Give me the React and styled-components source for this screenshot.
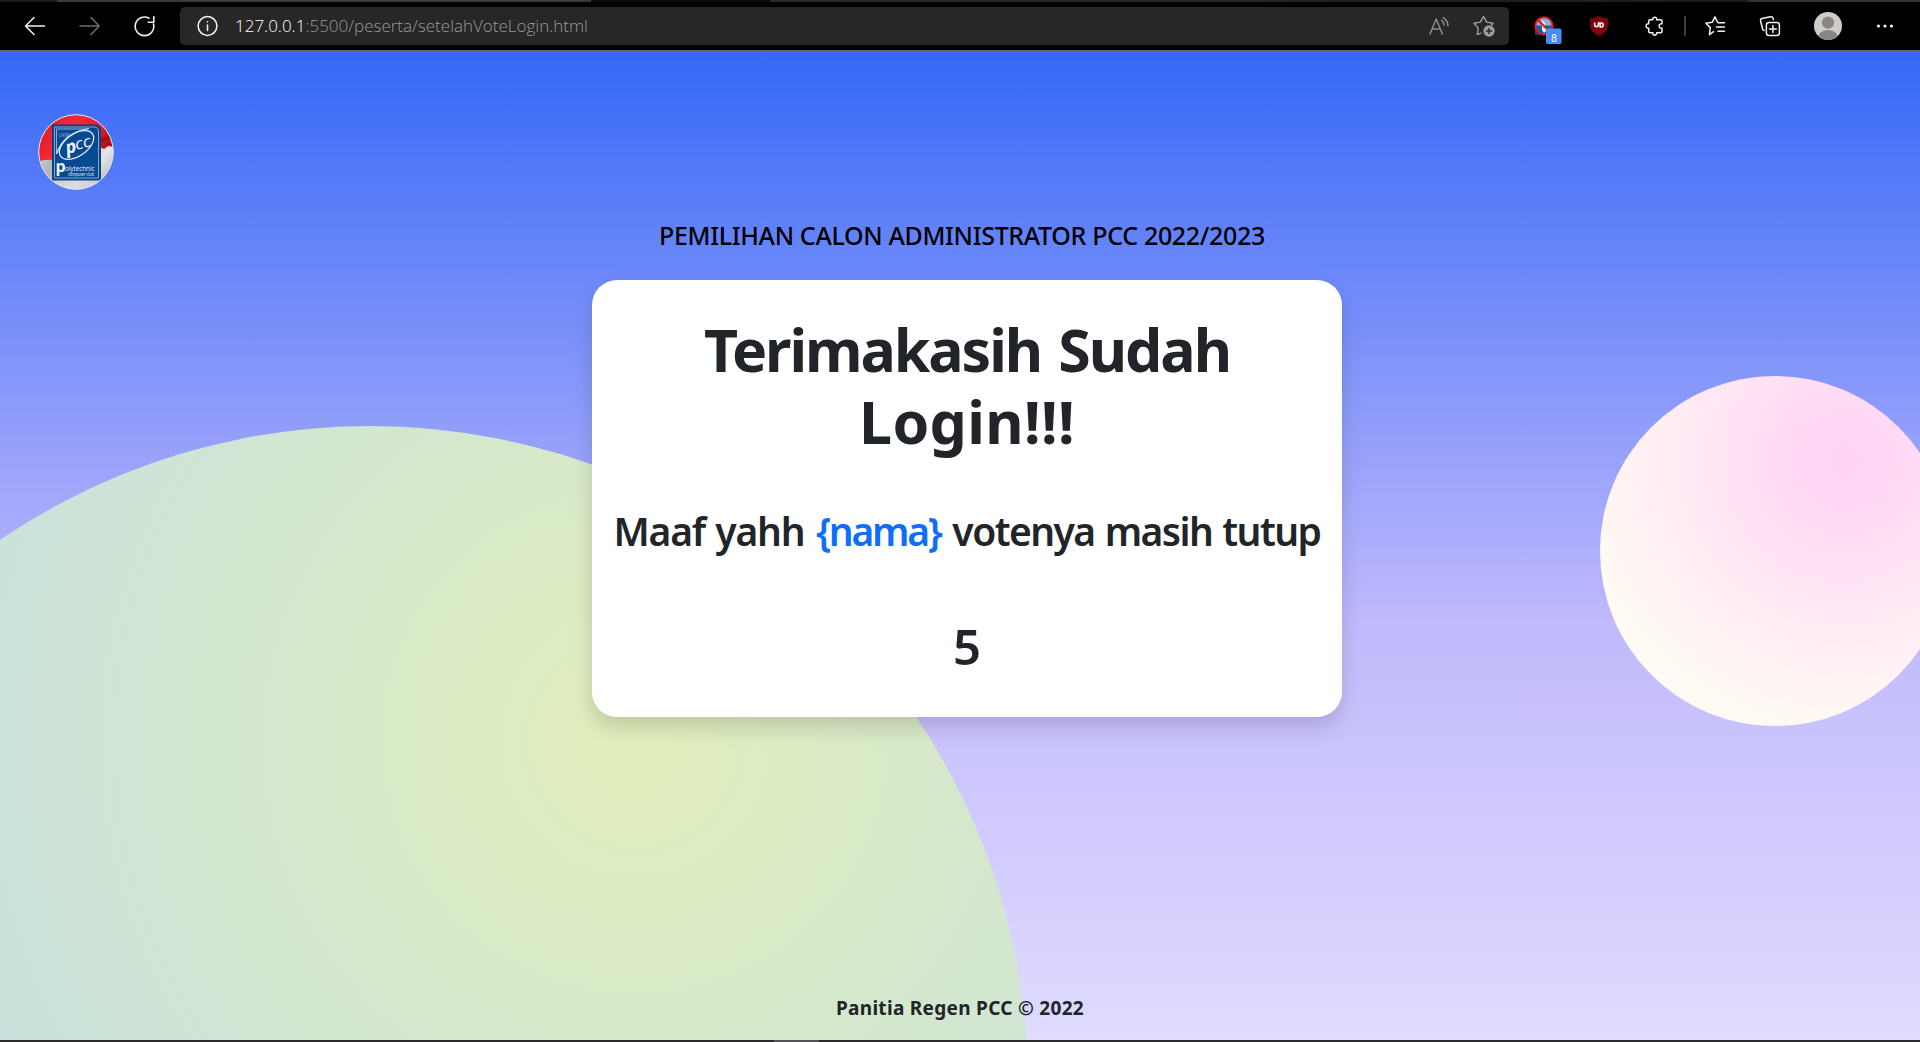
import React from "react";
import styled, { createGlobalStyle } from "styled-components";

const Global = createGlobalStyle`
  *, *::before, *::after { box-sizing: border-box; }
  body {
    margin: 0;
    overflow: hidden;
    background: #000;
    font-family: "Noto Sans", "Open Sans", sans-serif;
    color: #212529;
  }
  h1, h2, h3, p { margin: 0; }
`;

const Window = styled.div`
  display: flex;
  flex-direction: column;
  width: 1920px;
  height: 1042px;
  overflow: hidden;
`;

const TabEdge = styled.div`
  height: 2px;
  width: 100%;
  background: linear-gradient(90deg, #1c1c1c 57px, #3a3a3a 57px, #3a3a3a 591px, #0c0c0c 591px, #0c0c0c 770px, #2a2a2a 770px, #1c1c1c 1748px, #303030 1748px);
`;

const Toolbar = styled.header`
  display: flex;
  align-items: center;
  height: 49px;
  padding: 0 26px 1px 24px;
  border-bottom: 1px solid #6b6b66;
  background: #000;
  flex: none;
`;

const Slot = styled.span`
  display: flex;
  flex: none;
  align-items: center;
  justify-content: center;
  width: ${(p) => p.$w}px;
  margin-left: ${(p) => p.$gap || 0}px;
  color: ${(p) => p.$color || "#f2f2f2"};
  svg { display: block; overflow: visible; flex: none; }
`;

const Separator = styled.span`
  width: 2px;
  height: 20px;
  margin-left: 18px;
  background: #3c3c3c;
`;

const AddressBar = styled.div`
  display: flex;
  align-items: center;
  width: 1329px;
  height: 38px;
  margin-left: 26px;
  padding: 0 14px 0 17px;
  border-radius: 5px;
  background: #272727;
`;

const Url = styled.span`
  flex: 1;
  margin-left: 18px;
  font-family: "Open Sans", "Noto Sans", sans-serif;
  font-size: 17px;
  font-weight: 300;
  letter-spacing: 0;
  line-height: 24px;
  color: #999;
  white-space: nowrap;
`;

const Host = styled.span`
  color: #fff;
`;

const Page = styled.main`
  position: relative;
  display: flex;
  flex-direction: column;
  align-items: center;
  height: 989px;
  flex: none;
  overflow: hidden;
  background: linear-gradient(180deg, #3568f7 0%, #c1bafc 58%, #e0dbff 100%);
`;

const Orb = styled.div`
  position: absolute;
  left: ${(p) => p.$x}px;
  top: ${(p) => p.$y}px;
  width: ${(p) => p.$size}px;
  height: ${(p) => p.$size}px;
  border-radius: 50%;
  background: radial-gradient(76.73% 76.73% at 70.13% 24%, ${(p) => p.$from} 0%, ${(p) => p.$to} 100%);
`;

const Brand = styled.div`
  position: relative;
  align-self: flex-start;
  width: 76px;
  height: 76px;
  margin: 63px 0 0 38px;
  svg { display: block; }
`;

const Heading = styled.p`
  position: relative;
  margin-top: 26px;
  padding-left: 4px;
  font-size: 25px;
  line-height: 38px;
  font-weight: 500;
  letter-spacing: -0.33px;
  color: #000;
  white-space: nowrap;
`;

const Card = styled.section`
  position: relative;
  display: flex;
  flex-direction: column;
  align-items: center;
  width: 750px;
  height: 437px;
  margin: 26px 0 0 14px;
  padding-top: 33px;
  border-radius: 25px;
  background: #fff;
  box-shadow: 0 10px 20px rgba(0, 0, 0, 0.15);
  text-align: center;
  white-space: nowrap;
`;

const Title = styled.h1`
  width: 600px;
  font-size: 59px;
  line-height: 72px;
  font-weight: 700;
  letter-spacing: 0.35px;
  white-space: normal;
  &::first-line {
    letter-spacing: -2.05px;
    word-spacing: 4px;
  }
`;

const Tracked = styled.span`
  letter-spacing: ${(p) => p.$track}px;
`;

const Message = styled.h2`
  margin-top: 50px;
  font-size: 39px;
  line-height: 48px;
  font-weight: 600;
  word-spacing: 1.5px;
`;

const Name = styled(Tracked)`
  color: #0d6efd;
`;

const Countdown = styled.h3`
  margin-top: 61px;
  font-size: 49px;
  line-height: 60px;
  font-weight: 600;
`;

const Footer = styled.footer`
  position: relative;
  margin-top: auto;
  padding-bottom: 17px;
  font-size: 19px;
  line-height: 30px;
  font-weight: 700;
  letter-spacing: 0.3px;
  white-space: nowrap;
`;

const BottomEdge = styled.div`
  height: 2px;
  flex: none;
  background: linear-gradient(90deg, #2b2b2e 774px, #555357 774px, #555357 819px, #2b2b2e 819px);
`;

const Line = ({ size = 20, sw = 1.5, children }) => (
  <svg width={size} height={size} viewBox={`0 0 ${size} ${size}`} fill="none" stroke="currentColor" strokeWidth={sw} strokeLinecap="round" strokeLinejoin="round">
    {children}
  </svg>
);

const BackIcon = () => <Line><path d="M20.500 10H1.500M10 1.500L1.500 10L10 18.500" /></Line>;
const ForwardIcon = () => <Line><path d="M1 10H20M12 1.500L20.200 10L12 18.500" /></Line>;
const ReloadIcon = () => (
  <Line sw={1.600}><path d="M19.500 8A9.300 9.300 0 1 1 15 2.200M19.800 .8V6.300H14.200" /></Line>
);
const InfoIcon = () => (
  <Line sw={1.500}><circle cx="10.500" cy="10" r="9.400" /><path d="M10.500 9v5.500M10.500 5.700v.2" /></Line>
);
const ReadAloudIcon = () => (
  <Line><path d="M0 18L6.200 3L12.400 18M2.200 13H10.200M11.500 4.200Q13.800 6 14 9M13.300 1.600Q17.700 4.300 18 9.800" /></Line>
);
const AddFavouriteIcon = () => (
  <svg width="22" height="22" viewBox="0 0 22 22" fill="none">
    <path d="M8 18.100L4.300 19.600L5.100 12.900L1 8.300L7.300 7.100L10.500 1.400L13.700 7.100L20 8.300L18.600 10" stroke="currentColor" strokeWidth="1.4" strokeLinejoin="round" strokeLinecap="round" />
    <circle cx="16" cy="16" r="5.7" fill="currentColor" />
    <path d="M16 12.900v6.200M12.900 16h6.200" stroke="#272727" strokeWidth="1.4" />
  </svg>
);
const BlockedIcon = () => (
  <svg width="20" height="20" viewBox="0 0 20 20">
    <path d="M1 7h12v12H1z" fill="#123f78" />
    <circle cx="10" cy="10" r="8.500" fill="#7fb5dc" />
    <path d="M2 9.500h16v3A8.500 8.500 0 0 1 2 13z" fill="#245a96" />
    <path d="M8 4l3 3v4l2 3-3 3-2-3z" fill="#eef6fc" />
    <circle cx="10" cy="10" r="8.700" fill="none" stroke="#e5141c" strokeWidth="2" />
    <path d="M4 4L16 16" stroke="#e5141c" strokeWidth="2.2" />
    <rect x="12" y="12.500" width="15.500" height="15.500" rx="1.8" fill="#4a8cf7" />
    <text x="20" y="25.800" fontSize="10.500" fontFamily="Roboto, sans-serif" fill="#fff" textAnchor="middle">8</text>
  </svg>
);
const ShieldIcon = () => (
  <svg width="18" height="20" viewBox="0 0 18 20">
    <path d="M9 .2Q13 2.500 17.800 2.800V9.500Q17.500 16 9 20Q.5 16 .2 9.500V2.800Q5 2.500 9 .2z" fill="#820008" stroke="#5a2020" strokeWidth=".5" />
    <path d="M4.600 6.400v2.400a1.900 1.900 0 0 0 3.800 0V6.400" fill="none" stroke="#fff" strokeWidth="1.500" />
    <path d="M8.400 6.900h2.800a2 2 0 0 1 0 4H10.100V7.500" fill="none" stroke="#fff" strokeWidth="1.500" />
  </svg>
);
const PuzzleIcon = () => (
  <Line size={20} sw={1.500}>
    <path d="M5 3.700H7.800C7.200 .4 12.200 .4 11.600 3.700H15.500Q17 3.700 17 5.200V7.800C13.200 7.200 13.200 12.800 17 12.200V15.300Q17 16.800 15.500 16.800H11.600C12.200 20 7.200 20 7.800 16.800H5Q3.700 16.800 3.700 15.300V12.200C.3 12.800 .3 7.200 3.700 7.800V5.200Q3.700 3.700 5 3.700z" />
  </Line>
);
const FavouritesIcon = () => (
  <Line size={20} sw={1.500}>
    <path d="M8.500 15.700L4.400 18.600L5.300 11.600L.8 7.200L7.200 6.300L10 .8L12.200 5.600M13 6.800H19.500M11.500 11H19.500M13 15.300H19.500" />
  </Line>
);
const CollectionsIcon = () => (
  <Line size={20} sw={1.500}>
    <path d="M4 14.500Q3 14.200 2.600 13L.6 5Q.2 3 2 2.600L10.500 .7Q12.500 .4 13.100 2.300L13.400 3.600" />
    <rect x="6.400" y="6.500" width="13" height="13" rx="2.500" />
    <path d="M12.900 9.500v7M9.400 13h7" />
  </Line>
);
const AvatarIcon = () => (
  <svg width="28" height="28" viewBox="0 0 28 28">
    <defs><clipPath id="avatar"><circle cx="14" cy="14" r="14" /></clipPath></defs>
    <circle cx="14" cy="14" r="14" fill="#cfcdca" />
    <g clipPath="url(#avatar)" fill="#8a8683">
      <circle cx="14" cy="10.600" r="6.200" />
      <ellipse cx="14" cy="25.500" rx="10" ry="7.500" />
    </g>
  </svg>
);
const MoreIcon = () => (
  <svg width="18" height="4" viewBox="0 0 18 4" fill="currentColor">
    <circle cx="2.500" cy="2" r="1.600" /><circle cx="9" cy="2" r="1.600" /><circle cx="15.500" cy="2" r="1.600" />
  </svg>
);

const PccLogo = () => (
  <svg width="76" height="76" viewBox="0 0 76 76">
    <defs>
      <clipPath id="brand"><circle cx="38" cy="38" r="37.300" /></clipPath>
      <linearGradient id="cloth" x1="0" y1="0" x2="1" y2="1">
        <stop offset="0" stopColor="#f4f4f4" /><stop offset=".45" stopColor="#b4b4b8" />
        <stop offset=".7" stopColor="#e6e6e8" /><stop offset="1" stopColor="#a9a9ae" />
      </linearGradient>
      <linearGradient id="flag" x1="0" y1="0" x2="1" y2=".5">
        <stop offset="0" stopColor="#d81520" /><stop offset=".5" stopColor="#f52a35" />
        <stop offset=".8" stopColor="#e51a26" /><stop offset="1" stopColor="#b00d18" />
      </linearGradient>
    </defs>
    <g clipPath="url(#brand)">
      <rect width="76" height="76" fill="url(#cloth)" />
      <path d="M0 0H76V33L70 32L66 35L62 33Q40 38 14 46Q6 45 0 48z" fill="url(#flag)" />
      <path d="M62 25Q70 22 76 16V20Q70 27 62 29z" fill="#9c0d17" />
      <path d="M16 67Q40 62 66 66L60 76H20z" fill="#d4d6da" opacity=".6" />
    </g>
    <path d="M14.500 11H57Q62.500 11 62.500 17V66H14.500z" fill="#074a92" stroke="#0d3f78" strokeWidth="1" />
    <path d="M16.500 13H56Q60.500 13 60.500 18V64H16.500z" fill="none" stroke="#8fb0d5" strokeWidth=".9" />
    <path d="M18.500 40V15H50" fill="none" stroke="#8fb0d5" strokeWidth="1" />
    <g fill="none" stroke="#dfeaf6" strokeWidth="1.300">
      <ellipse cx="38.500" cy="31" rx="19.500" ry="11" transform="rotate(-35 38.500 31)" />
      <path d="M18.500 40Q25 19 51 14.500" strokeWidth="1.200" />
    </g>
    <g fontFamily="Open Sans, sans-serif" fill="#eef4fb">
      <text x="20.500" y="22.500" fontSize="5" fill="#9db9da">UKM</text>
      <g transform="rotate(-14 38 33)" fontStyle="italic">
        <text x="27.500" y="37.500" fontSize="18" fontWeight="700">p</text>
        <text x="37.500" y="36" fontSize="16" fontWeight="500" textLength="16" lengthAdjust="spacingAndGlyphs">cc</text>
      </g>
      <text x="17.500" y="57.500" fontSize="16" fontWeight="700">p</text>
      <text x="27" y="56.500" fontSize="7.500" textLength="29.500" lengthAdjust="spacingAndGlyphs" fontWeight="500">olytechnic</text>
      <text x="30" y="61.500" fontSize="4.500" textLength="26" lengthAdjust="spacingAndGlyphs">computer club</text>
    </g>
    <circle cx="38" cy="38" r="37.300" fill="none" stroke="#e4e8f5" strokeWidth="1" />
  </svg>
);

export default function App() {
  return (
    <Window>
      <Global />
      <TabEdge />
      <Toolbar>
        <Slot $w={20}><BackIcon /></Slot>
        <Slot $w={20} $gap={35} $color="#6e6e6e"><ForwardIcon /></Slot>
        <Slot $w={20} $gap={35}><ReloadIcon /></Slot>
        <AddressBar>
          <Slot $w={20}><InfoIcon /></Slot>
          <Url><Host>127.0.0.1</Host>:5500/peserta/setelahVoteLogin.html</Url>
          <Slot $w={20} $color="#8c8c8c"><ReadAloudIcon /></Slot>
          <Slot $w={22} $gap={23} $color="#9c9c9c"><AddFavouriteIcon /></Slot>
        </AddressBar>
        <Slot $w={20} $gap={25}><BlockedIcon /></Slot>
        <Slot $w={20} $gap={35}><ShieldIcon /></Slot>
        <Slot $w={22} $gap={35}><PuzzleIcon /></Slot>
        <Separator />
        <Slot $w={20} $gap={19}><FavouritesIcon /></Slot>
        <Slot $w={22} $gap={34}><CollectionsIcon /></Slot>
        <Slot $w={28} $gap={33}><AvatarIcon /></Slot>
        <Slot $w={18} $gap={34}><MoreIcon /></Slot>
      </Toolbar>
      <Page>
        <Orb $x={-288} $y={375} $size={1316} $from="#e1eebb" $to="#bfdcec" />
        <Orb $x={1600} $y={325} $size={350} $from="#ffd1f5" $to="#fffaf3" />
        <Brand><PccLogo /></Brand>
        <Heading>PEMILIHAN CALON ADMINISTRATOR PCC 2022/2023</Heading>
        <Card>
          <Title>Terimakasih Sudah Login!!!</Title>
          <Message>
            <Tracked $track={-1.25}>Maaf yahh</Tracked> <Name $track={-2.25}>{"{nama}"}</Name>{" "}
            <Tracked $track={-1.56}>votenya masih tutup</Tracked>
          </Message>
          <Countdown>5</Countdown>
        </Card>
        <Footer>Panitia Regen PCC © 2022</Footer>
      </Page>
      <BottomEdge />
    </Window>
  );
}
